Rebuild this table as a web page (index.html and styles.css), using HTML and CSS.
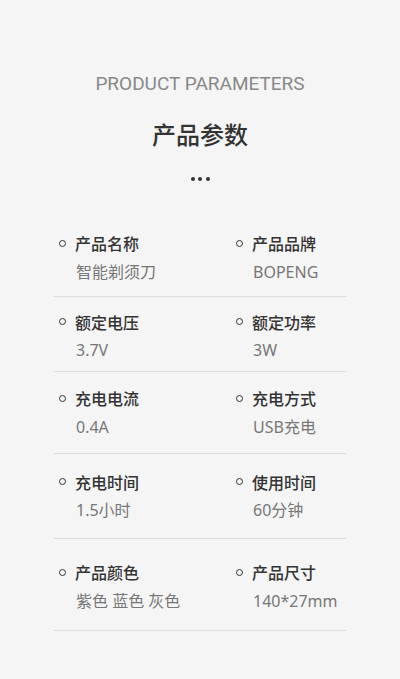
FILE: index.html
```html
<!DOCTYPE html>
<html lang="zh-CN">
  <head>
    <meta charset="UTF-8" />
    <meta name="viewport" content="width=device-width, initial-scale=1.0" />
    <title>产品参数</title>
    <link rel="stylesheet" href="styles.css">
  </head>
  <body>
    <div class="page">
      <div class="header">
        <div class="title-en">PRODUCT PARAMETERS</div>
        <h1 class="title-zh">产品参数</h1>
        <div class="dots"><span></span><span></span><span></span></div>
      </div>

      <div class="params">
        <div class="param-row">
          <div class="param">
            <div class="param-name">产品名称</div>
            <div class="param-value">智能剃须刀</div>
          </div>
          <div class="param">
            <div class="param-name">产品品牌</div>
            <div class="param-value">BOPENG</div>
          </div>
        </div>
        <div class="param-row">
          <div class="param">
            <div class="param-name">额定电压</div>
            <div class="param-value">3.7V</div>
          </div>
          <div class="param">
            <div class="param-name">额定功率</div>
            <div class="param-value">3W</div>
          </div>
        </div>
        <div class="param-row">
          <div class="param">
            <div class="param-name">充电电流</div>
            <div class="param-value">0.4A</div>
          </div>
          <div class="param">
            <div class="param-name">充电方式</div>
            <div class="param-value">USB充电</div>
          </div>
        </div>
        <div class="param-row">
          <div class="param">
            <div class="param-name">充电时间</div>
            <div class="param-value">1.5小时</div>
          </div>
          <div class="param">
            <div class="param-name">使用时间</div>
            <div class="param-value">60分钟</div>
          </div>
        </div>
        <div class="param-row">
          <div class="param">
            <div class="param-name">产品颜色</div>
            <div class="param-value">紫色 蓝色 灰色</div>
          </div>
          <div class="param">
            <div class="param-name">产品尺寸</div>
            <div class="param-value">140*27mm</div>
          </div>
        </div>
      </div>
    </div>
  </body>
</html>
```

FILE: styles.css
```css
body {
  margin: 0;
  background: #f5f5f5;
  font-family: "Noto Sans", "Noto Sans CJK SC", sans-serif;
}

.page {
  height: 679px;
  overflow: hidden;
}

.header {
  padding-top: 74px;
  text-align: center;
}

.title-en {
  font-family: Roboto, "Liberation Sans", sans-serif;
  font-size: 19px;
  line-height: 20px;
  color: #888;
}

.title-zh {
  margin: 25px 0 0;
  font-family: "Noto Sans CJK SC", sans-serif;
  font-size: 24px;
  line-height: 30px;
  font-weight: 500;
  color: #333;
}

.dots {
  display: flex;
  justify-content: center;
  gap: 3.5px;
  margin-top: 28px;
}

.dots span {
  width: 4px;
  height: 4px;
  border-radius: 50%;
  background: #333;
}

.params {
  margin: 52px 54px 0;
}

.param-row {
  display: grid;
  grid-template-columns: 177px 1fr;
  padding: 0 0 14px 5px;
  border-bottom: 1px solid #dcdcdc;
}

.param-row:nth-child(2) {
  padding-top: 15px;
  padding-bottom: 11px;
}

.param-row:nth-child(3) {
  padding-top: 16px;
  padding-bottom: 16px;
}

.param-row:nth-child(4) {
  padding-top: 18px;
  padding-bottom: 18px;
}

.param-row:nth-child(5) {
  padding-top: 23px;
  padding-bottom: 19px;
}

.param-name {
  display: flex;
  align-items: center;
  gap: 9px;
  font-family: "Noto Sans CJK SC", sans-serif;
  font-size: 16px;
  line-height: 20px;
  font-weight: 500;
  color: #333;
}

.param-name::before {
  content: "";
  width: 5px;
  height: 5px;
  border: 1.5px solid #333;
  border-radius: 50%;
}

.param-value {
  margin-top: 8.5px;
  padding-left: 17px;
  font-size: 16px;
  line-height: 20px;
  color: #777;
}
```
